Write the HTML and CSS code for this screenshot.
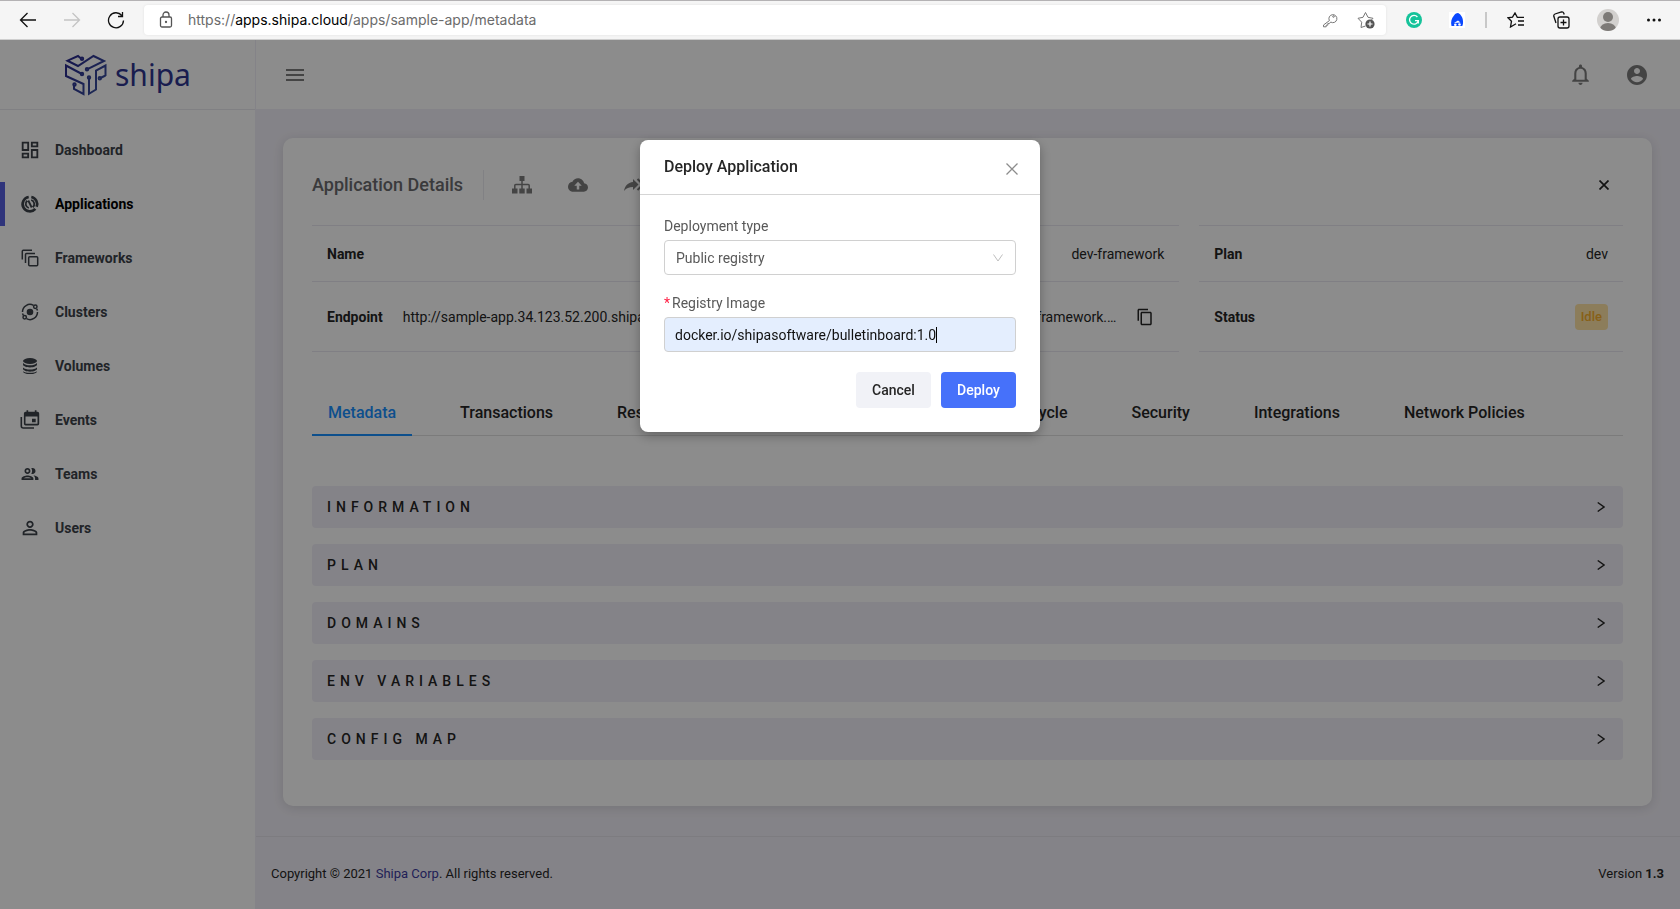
FILE: index.html
```
<!DOCTYPE html>
<html lang="en">

<head>
    <meta charset="UTF-8">
    <meta name="viewport" content="width=device-width, initial-scale=1.0">
    <title>Shipa - sample-app</title>
    <link rel="stylesheet" href="styles.css">
</head>

<body>
    <!-- browser toolbar -->
    <div class="browser">
        <div class="browser-nav">
            <button type="button" class="icon-btn" aria-label="Back">
                <svg width="18" height="18" viewBox="0 0 18 18" class="line"><path d="M17 9H1.500M8.500 2L1.500 9l7 7" /></svg>
            </button>
            <button type="button" class="icon-btn faded" aria-label="Forward" disabled>
                <svg width="18" height="18" viewBox="0 0 18 18" class="line"><path d="M1 9h15.500M9.500 2l7 7-7 7" /></svg>
            </button>
            <button type="button" class="icon-btn" aria-label="Refresh">
                <svg width="18" height="18" viewBox="0 0 18 18" class="line"><path d="M16.500 9.500A7.500 7.500 0 1 1 14.800 4.500M15.500 1v4.500H11" /></svg>
            </button>
        </div>
        <div class="address">
            <svg width="14" height="18" viewBox="0 0 14 18" class="line grey"><rect x="1.500" y="6" width="11" height="10" rx="1.500" /><path d="M4 6V4a3 3 0 0 1 6 0v2" /><circle cx="7" cy="11" r=".5" /></svg>
            <span class="url">https://<b>apps.shipa.cloud</b>/apps/sample-app/metadata</span>
            <button type="button" class="icon-btn" aria-label="Passwords">
                <svg width="16" height="16" viewBox="0 0 16 16" class="line thin"><path d="M7.400 8.600L1.500 13v1.800h2.700v-1.600h1.600v-1.600h1.500L8.700 10a4 4 0 1 0-1.300-1.400z" /><circle cx="11.500" cy="4.500" r=".8" /></svg>
            </button>
            <button type="button" class="icon-btn" aria-label="Add to favorites">
                <svg width="18" height="18" viewBox="0 0 18 18"><path class="line thin" d="M8.500 15L4 16.500l.7-5.300L1 7.300l5-1L8.500 1.500 11 6.300l5 1-1.500 1.600" /><circle cx="13" cy="13" r="4.600" fill="#555" /><path d="M13 10.500v5M10.500 13h5" stroke="#fff" stroke-width="1.200" /></svg>
            </button>
        </div>
        <div class="extensions">
            <button type="button" class="icon-btn" aria-label="Grammar checker">
                <svg width="16" height="16" viewBox="0 0 16 16"><circle cx="8" cy="8" r="8" fill="#15c39a" /><path d="M11.400 5A4.400 4.400 0 1 0 12.300 8.700H9M12.300 8.500v3" fill="none" stroke="#fff" stroke-width="1.300" /></svg>
            </button>
            <button type="button" class="icon-btn" aria-label="Extension">
                <svg width="16" height="16" viewBox="0 0 16 16"><rect width="16" height="16" fill="#fff" /><path d="M2.500 14C1.500 10 2.500 6 5 3.500 6.500 1.500 8.500.8 9.500 1.200c2 1 4.500 4 4.500 8 .2 2-.2 3.500-.7 4.800H3z" fill="#0a48ff" /><path d="M5 11l4-2.500 2.500 2z" fill="#fff" /><circle cx="6.300" cy="12.800" r="1.300" fill="#fff" /><circle cx="10.500" cy="12.500" r="1.300" fill="#fff" /></svg>
            </button>
            <span class="separator"></span>
            <button type="button" class="icon-btn" aria-label="Favorites">
                <svg width="18" height="16" viewBox="0 0 18 16" class="line"><path d="M9 11.800L3.500 15l1-5.800L1 5.800l4.500-.7L8 1l2.300 4.300H17M11 9h6M11 13h6" /></svg>
            </button>
            <button type="button" class="icon-btn" aria-label="Collections">
                <svg width="18" height="18" viewBox="0 0 18 18" class="line"><rect x="6" y="6" width="11" height="11" rx="2" /><path d="M11.500 8.500v6M8.500 11.500h6M4 12L1.800 5.300A2 2 0 0 1 3 3l6.500-2a2 2 0 0 1 2.300 1.200l.4 1.300" /></svg>
            </button>
            <button type="button" class="icon-btn" aria-label="Profile">
                <svg width="22" height="24" viewBox="0 0 22 24"><clipPath id="face"><circle cx="11" cy="12" r="11" /></clipPath><circle cx="11" cy="12" r="11" fill="#d2d0ce" /><g fill="#7d7a77" clip-path="url(#face)"><circle cx="11" cy="9" r="5" /><ellipse cx="11" cy="21" rx="8" ry="6" /></g></svg>
            </button>
            <button type="button" class="icon-btn" aria-label="Settings and more">
                <svg width="16" height="16" viewBox="0 0 16 16"><circle cx="2.500" cy="8" r="1.500" /><circle cx="8" cy="8" r="1.500" /><circle cx="13.500" cy="8" r="1.500" /></svg>
            </button>
        </div>
    </div>

    <div class="app">
        <aside class="sidebar">
            <a href="#" class="logo">
                <svg width="42" height="42" viewBox="65 54 42 42" class="mark">
                    <linearGradient id="brand" gradientUnits="userSpaceOnUse" x1="65" y1="60" x2="107" y2="90">
                        <stop offset="0" stop-color="#28268c" />
                        <stop offset="1" stop-color="#3a539f" />
                    </linearGradient>
                    <path d="M81 58.500L78 56l-10.500 4.700L78 66l15.500-10 10.500 5-16 7.800M81 73.500L66 65.500V76l17.500 8v10L74 89v-3.500M105.500 76V65.500L96 70.500v19l-7 4.300V79M105.500 75.500L100.500 78" />
                    <circle cx="82" cy="58.800" r="1.200" /><circle cx="87" cy="69.300" r="1.200" /><circle cx="82" cy="74" r="1.200" />
                    <circle cx="74.500" cy="84.500" r="1.200" /><circle cx="89" cy="77.500" r="1.200" /><circle cx="99.800" cy="78.300" r="1.200" />
                </svg>
                <span>shipa</span>
            </a>
            <nav class="menu">
                <a href="#">
                    <svg width="22" height="22" viewBox="0 0 24 24"><path d="M19 5v2h-4V5h4M9 5v6H5V5h4m10 8v6h-4v-6h4M9 17v2H5v-2h4M21 3h-8v6h8V3zM11 3H3v10h8V3zm10 8h-8v10h8V11zm-10 4H3v6h8v-6z" /></svg>
                    Dashboard
                </a>
                <a href="#" class="active">
                    <svg width="22" height="22" viewBox="0 0 22 22" class="outline"><path stroke-width="2.700" d="M12.300 4A7.200 7.200 0 0 1 17.600 13.800M16.300 15.800A7.200 7.200 0 1 1 9.700 4" /><path stroke-width="1.800" d="M12.200 7a4.200 4.200 0 0 1 1.600 7.200M9.800 15a4.200 4.200 0 0 1-1.600-7.200M9.300 7.500l3.400 7" /></svg>
                    Applications
                </a>
                <a href="#">
                    <svg width="22" height="22" viewBox="0 0 22 22" class="outline"><rect x="9.700" y="9.700" width="9" height="9" rx="1" /><path d="M6.500 16V7.500a1 1 0 0 1 1-1H16M3.300 12.500V4.300a1 1 0 0 1 1-1H13" /></svg>
                    Frameworks
                </a>
                <a href="#">
                    <svg width="22" height="22" viewBox="0 0 22 22" class="outline"><circle cx="11" cy="11" r="3.300" fill="currentColor" stroke="none" /><path d="M3.500 11A7.500 7.500 0 0 1 14.500 4.300M18.500 11A7.500 7.500 0 0 1 7.500 17.700M3.500 12.500l.8 1.800M18.500 9.500L17.700 7.700" /><circle cx="16.300" cy="5.700" r="1.700" /><circle cx="5.700" cy="16.300" r="1.700" /></svg>
                    Clusters
                </a>
                <a href="#">
                    <svg width="22" height="22" viewBox="0 0 22 22"><ellipse cx="11" cy="6" rx="7" ry="2.900" /><path d="M4 8c1.500 1.500 4 2.300 7 2.300S16.500 9.500 18 8v1.600c0 1.600-3.100 2.900-7 2.900S4 11.200 4 9.600zM4 12.500c1.500 1.500 4 2 7 2s5.500-.5 7-2v1.300c0 1.600-3.100 2.900-7 2.900s-7-1.300-7-2.900zM4 16.200c1.500 1 4 1.600 7 1.600s5.500-.6 7-1.600c0 1.700-3.100 2.900-7 2.900s-7-1.200-7-2.900z" /></svg>
                    Volumes
                </a>
                <a href="#">
                    <svg width="22" height="22" viewBox="0 0 22 22"><path d="M18.500 2.800h-1V1.200h-1.700v1.600H9.200V1.200H7.500v1.600h-1A1.700 1.700 0 0 0 4.900 4.500v10.300a1.700 1.700 0 0 0 1.700 1.700h11.900a1.700 1.700 0 0 0 1.700-1.700V4.500a1.700 1.700 0 0 0-1.700-1.700zm0 12h-12V7.500h12zM13 9.700h3.700v3.500H13z" /><path d="M2.300 8v9a2 2 0 0 0 2 2H15" fill="none" stroke="currentColor" stroke-width="1.600" /></svg>
                    Events
                </a>
                <a href="#">
                    <svg width="22" height="22" viewBox="-1 -1 26 26"><path d="M9 13.750c-2.340 0-7 1.170-7 3.500V19h14v-1.750c0-2.330-4.660-3.500-7-3.500zM4.340 17c.84-.58 2.870-1.250 4.660-1.250s3.820.67 4.660 1.250H4.340zM9 12c1.930 0 3.500-1.570 3.500-3.500S10.930 5 9 5 5.500 6.570 5.500 8.500 7.070 12 9 12zm0-5c.83 0 1.500.67 1.500 1.500S9.830 10 9 10s-1.500-.67-1.500-1.500S8.170 7 9 7zm7.040 6.810c1.160.84 1.960 1.960 1.960 3.440V19h4v-1.750c0-2.020-3.500-3.170-5.960-3.440zM15 12c1.930 0 3.500-1.570 3.500-3.500S16.930 5 15 5c-.54 0-1.040.13-1.500.35.630.89 1 1.980 1 3.150s-.37 2.260-1 3.150c.46.220.96.350 1.500.35z" /></svg>
                    Teams
                </a>
                <a href="#">
                    <svg width="22" height="22" viewBox="0 0 24 24"><path d="M12 5.900c1.160 0 2.100.94 2.100 2.100s-.94 2.100-2.100 2.100S9.900 9.160 9.900 8s.94-2.100 2.100-2.100m0 9c2.970 0 6.100 1.460 6.100 2.100v1.100H5.900V17c0-.64 3.130-2.100 6.100-2.100M12 4C9.790 4 8 5.790 8 8s1.790 4 4 4 4-1.790 4-4-1.790-4-4-4zm0 9c-2.670 0-8 1.340-8 4v3h16v-3c0-2.660-5.330-4-8-4z" /></svg>
                    Users
                </a>
            </nav>
        </aside>

        <div class="main">
            <header class="topbar">
                <button type="button" class="icon-btn" aria-label="Toggle menu">
                    <svg width="18" height="12" viewBox="0 0 18 12"><path d="M0 0h18v2H0zM0 5h18v2H0zM0 10h18v2H0z" /></svg>
                </button>
                <div class="topbar-right">
                    <button type="button" class="icon-btn" aria-label="Notifications">
                        <svg width="25" height="25" viewBox="0 0 24 24"><path d="M12 22c1.100 0 2-.9 2-2h-4c0 1.100.9 2 2 2zm6-6v-5c0-3.070-1.630-5.640-4.500-6.320V4c0-.83-.67-1.500-1.500-1.500s-1.500.67-1.500 1.500v.68C7.640 5.360 6 7.920 6 11v5l-2 2v1h16v-1l-2-2zm-2 1H8v-6c0-2.480 1.510-4.500 4-4.500s4 2.020 4 4.500v6z" /></svg>
                    </button>
                    <button type="button" class="icon-btn" aria-label="Account">
                        <svg width="24" height="24" viewBox="0 0 24 24"><path d="M12 2C6.480 2 2 6.480 2 12s4.480 10 10 10 10-4.480 10-10S17.520 2 12 2zm0 3c1.660 0 3 1.340 3 3s-1.340 3-3 3-3-1.340-3-3 1.340-3 3-3zm0 14.200c-2.500 0-4.710-1.280-6-3.220.03-1.990 4-3.080 6-3.080 1.990 0 5.970 1.090 6 3.080-1.290 1.940-3.500 3.220-6 3.220z" /></svg>
                    </button>
                </div>
            </header>

            <main class="card">
                <div class="card-head">
                    <h1>Application Details</h1>
                    <div class="actions">
                        <button type="button" class="icon-btn" aria-label="Application map">
                            <svg width="20" height="18" viewBox="0 0 20 18"><path d="M7.500 0h5v5h-5zM0 12.500h5.500V17.500H0zM7.300 12.500h5.400V17.500H7.300zM14.500 12.500H20V17.500h-5.500z" /><path d="M10 5v8M2.800 13V9.500a1 1 0 0 1 1-1h12.400a1 1 0 0 1 1 1V13" fill="none" stroke="currentColor" stroke-width="1.500" /></svg>
                        </button>
                        <button type="button" class="icon-btn" aria-label="Deploy">
                            <svg width="20" height="20" viewBox="0 0 24 24"><path d="M19.350 10.040C18.670 6.590 15.640 4 12 4 9.110 4 6.600 5.640 5.350 8.040 2.340 8.360 0 10.910 0 14c0 3.310 2.690 6 6 6h13c2.760 0 5-2.240 5-5 0-2.640-2.050-4.780-4.650-4.960zM13.500 13v4.500h-3V13H7.500L12 8l4.500 5z" /></svg>
                        </button>
                        <button type="button" class="icon-btn" aria-label="Share">
                            <svg width="20" height="14" viewBox="0 0 20 14"><path d="M9 4V1l5.500 5.500L9 12V9C5 9 2.500 10 0 13c.8-5 4-8.500 9-9z" /><path d="M13.500 1l5.500 5.500-5.500 5.500" fill="none" stroke="currentColor" stroke-width="2" /></svg>
                        </button>
                    </div>
                    <button type="button" class="icon-btn close" aria-label="Close details">
                        <svg width="10" height="10" viewBox="0 0 10 10"><path d="M.5.5l9 9M9.500.5l-9 9" stroke="currentColor" stroke-width="1.700" /></svg>
                    </button>
                </div>

                <div class="details">
                    <div class="cell"><b>Name</b><span>sample-app</span></div>
                    <div class="cell"><b>Framework</b><span>dev-framework</span></div>
                    <div class="cell"><b>Plan</b><span>dev</span></div>
                    <div class="cell tall endpoint">
                        <b>Endpoint</b>
                        <span class="urls"><span>http://sample-app.34.123.52.200.shipa.cloud</span><span>sample-app.dev-framework.…</span></span>
                        <button type="button" class="icon-btn" aria-label="Copy endpoint">
                            <svg width="18" height="18" viewBox="0 0 24 24"><path d="M16 1H4c-1.100 0-2 .9-2 2v14h2V3h12V1zm3 4H8c-1.100 0-2 .9-2 2v14c0 1.100.9 2 2 2h11c1.100 0 2-.9 2-2V7c0-1.100-.9-2-2-2zm0 16H8V7h11v14z" /></svg>
                        </button>
                    </div>
                    <div class="cell tall"><b>Status</b><span class="badge">Idle</span></div>
                </div>

                <nav class="tabs">
                    <a href="#" class="active">Metadata</a>
                    <a href="#">Transactions</a>
                    <a href="#">Resources</a>
                    <a href="#">Monitoring</a>
                    <a href="#">Logs</a>
                    <a href="#">Life Cycle</a>
                    <a href="#">Security</a>
                    <a href="#">Integrations</a>
                    <a href="#">Network Policies</a>
                </nav>

                <div class="panels">
                    <button type="button" class="panel">INFORMATION <svg width="8" height="10" viewBox="0 0 8 10"><path d="M.7.5L7 5 .7 9.500" /></svg></button>
                    <button type="button" class="panel">PLAN <svg width="8" height="10" viewBox="0 0 8 10"><path d="M.7.5L7 5 .7 9.500" /></svg></button>
                    <button type="button" class="panel">DOMAINS <svg width="8" height="10" viewBox="0 0 8 10"><path d="M.7.5L7 5 .7 9.500" /></svg></button>
                    <button type="button" class="panel">ENV VARIABLES <svg width="8" height="10" viewBox="0 0 8 10"><path d="M.7.5L7 5 .7 9.500" /></svg></button>
                    <button type="button" class="panel">CONFIG MAP <svg width="8" height="10" viewBox="0 0 8 10"><path d="M.7.5L7 5 .7 9.500" /></svg></button>
                </div>
            </main>

            <footer class="footer">
                <span>Copyright © 2021 <a href="#">Shipa Corp</a>. All rights reserved.</span>
                <span>Version <b>1.3</b></span>
            </footer>
        </div>
    </div>

    <!-- deploy dialog -->
    <div class="overlay">
        <form class="modal" role="dialog" aria-labelledby="modal-title">
            <div class="modal-head">
                <h2 id="modal-title">Deploy Application</h2>
                <button type="button" class="icon-btn" aria-label="Close">
                    <svg width="12" height="12" viewBox="0 0 12 12"><path d="M.5.5l11 11M11.500.5l-11 11" stroke="currentColor" stroke-width="1.300" /></svg>
                </button>
            </div>
            <div class="modal-body">
                <label for="type">Deployment type</label>
                <div class="select">
                    <select id="type">
                        <option>Public registry</option>
                    </select>
                    <svg width="10" height="8" viewBox="0 0 10 8"><path d="M.5.5L5 7 9.500.5" /></svg>
                </div>
                <label for="image"><span class="required">*</span>Registry Image</label>
                <input type="text" id="image" value="docker.io/shipasoftware/bulletinboard:1.0">
                <div class="buttons">
                    <button type="button" class="btn">Cancel</button>
                    <button type="submit" class="btn primary">Deploy</button>
                </div>
            </div>
        </form>
    </div>
</body>

</html>
```

FILE: styles.css
```
* {
    box-sizing: border-box;
}

body {
    margin: 0;
    min-height: 100vh;
    display: flex;
    flex-direction: column;
    font-family: Roboto, Arial, sans-serif;
    font-size: 14px;
    line-height: 20px;
    color: #262626;
}

a {
    color: inherit;
    text-decoration: none;
}

button,
input,
select {
    font: inherit;
    color: inherit;
}

svg {
    display: block;
    flex: none;
    fill: currentColor;
}

.icon-btn {
    display: flex;
    padding: 0;
    border: 0;
    background: none;
    cursor: pointer;
}

/* browser toolbar */
.browser {
    display: flex;
    align-items: center;
    height: 40px;
    padding-left: 19px;
    background: #f5f5f5;
    border-top: 1px solid #b4b2b4;
    border-bottom: 1px solid #cfcfcf;
    color: #111;
}

.browser-nav {
    display: flex;
    gap: 26px;
    width: 125px;
}

.line {
    fill: none;
    stroke: currentColor;
    stroke-width: 1.3;
}

.grey {
    color: #555;
}

.thin {
    fill: none;
    stroke: #777;
    stroke-width: 1;
}

.faded {
    color: #c4c4c4;
}

.address {
    flex: 1;
    display: flex;
    align-items: center;
    gap: 19px;
    height: 30px;
    padding: 0 11px 0 15px;
    border-radius: 4px;
    background: #fff;
    box-shadow: 0 0 3px rgba(0, 0, 0, 0.08);
}

.url {
    flex: 1;
    margin-left: -4px;
    font-family: Inter, sans-serif;
    color: #6b6b6b;
}

.url b {
    font-weight: 400;
    color: #000;
}

.extensions {
    display: flex;
    align-items: center;
    gap: 27px;
    width: 294px;
    padding-left: 20px;
}

.separator {
    flex: none;
    width: 2px;
    height: 16px;
    margin: 0 -7px;
    background: #c8c8c8;
}

/* layout */
.app {
    flex: 1;
    display: flex;
    background: #f1eff7;
}

.sidebar {
    width: 256px;
    flex: none;
    background: #fff;
    border-right: 1px solid #f1eff7;
}

.logo {
    display: flex;
    align-items: center;
    gap: 8px;
    height: 70px;
    padding-left: 65px;
    border-bottom: 1px solid #e9e9ee;
    font-family: "Noto Sans", sans-serif;
    font-size: 30px;
    color: #2f3591;
}

.mark {
    fill: none;
    stroke: url(#brand);
    stroke-width: 2;
}

.menu {
    display: flex;
    flex-direction: column;
    gap: 10px;
    padding-top: 18px;
    font-weight: 700;
    color: #3c424a;
}

.menu a {
    display: flex;
    align-items: center;
    gap: 14px;
    height: 44px;
    padding-left: 14px;
    border-left: 5px solid transparent;
}

.menu .active {
    border-color: #5660e0;
    color: #000;
}

.menu .active svg {
    color: #3c424a;
}

.outline {
    fill: none;
    stroke: currentColor;
    stroke-width: 1.5;
}

.main {
    flex: 1;
    min-width: 0;
    display: flex;
    flex-direction: column;
}

.topbar {
    display: flex;
    align-items: center;
    justify-content: space-between;
    height: 69px;
    padding: 0 31px 0 30px;
    background: #fff;
    color: #7d7d7d;
}

.topbar-right {
    display: flex;
    align-items: center;
    gap: 32px;
}

.card {
    margin: 29px 28px 30px 27px;
    padding: 32px 29px 46px;
    border-radius: 10px;
    background: #fff;
    box-shadow: 0 2px 12px rgba(0, 0, 0, 0.12);
}

.card-head {
    display: flex;
    align-items: center;
    height: 30px;
    margin-bottom: 25px;
    color: #7d7d7d;
}

.card-head h1 {
    margin: 0;
    font-size: 18px;
    font-weight: 500;
    color: #6a6a6d;
}

.actions {
    display: flex;
    align-items: center;
    gap: 36px;
    height: 30px;
    margin-left: 20px;
    padding-left: 28px;
    border-left: 1px solid #ececf0;
}

.close {
    margin-left: auto;
    margin-right: 14px;
    color: #262626;
}

.details {
    display: grid;
    grid-template-columns: repeat(3, 1fr);
    column-gap: 20px;
}

.cell {
    display: flex;
    align-items: center;
    justify-content: space-between;
    height: 57px;
    padding: 0 15px;
    border: solid #e9e8f0;
    border-width: 1px 0;
}

.tall {
    height: 70px;
    border-top: 0;
}

.endpoint {
    grid-column: span 2;
    gap: 20px;
    padding-right: 25px;
}

.urls {
    flex: 1;
    display: flex;
    justify-content: space-between;
}

.badge {
    padding: 3px 6px;
    border-radius: 4px;
    font-size: 13px;
    font-weight: 500;
    background: #ffe3a6;
    color: #f7b02c;
}

.tabs {
    display: flex;
    gap: 32px;
    margin-top: 38px;
    box-shadow: inset 0 -1px #e0e0e0;
    font-size: 16px;
    font-weight: 500;
}

.tabs a {
    padding: 13px 16px;
}

.tabs .active {
    color: #1890ff;
    box-shadow: inset 0 -2px #1890ff;
}

.panels {
    display: flex;
    flex-direction: column;
    gap: 16px;
    margin-top: 50px;
}

.panel {
    display: flex;
    align-items: center;
    justify-content: space-between;
    height: 42px;
    padding: 0 18px 0 15px;
    border: 0;
    border-radius: 4px;
    background: #f1eff7;
    font-weight: 500;
    letter-spacing: 5px;
    cursor: pointer;
}

.panel svg {
    fill: none;
    stroke: currentColor;
    stroke-width: 1.4;
}

.footer {
    flex: 1;
    display: flex;
    align-items: center;
    justify-content: space-between;
    padding: 2px 16px 0 15px;
    border-top: 1px solid #e3e2ea;
    font-size: 13px;
}

.footer a {
    color: #3d3b9e;
}

/* deploy dialog */
.overlay {
    position: fixed;
    inset: 40px 0 0;
    display: flex;
    justify-content: center;
    align-items: flex-start;
    padding-top: 100px;
    background: rgba(0, 0, 0, 0.45);
}

.modal {
    width: 400px;
    border-radius: 8px;
    background: #fff;
    box-shadow: 0 4px 12px rgba(0, 0, 0, 0.3);
}

.modal-head {
    display: flex;
    align-items: flex-start;
    justify-content: space-between;
    height: 55px;
    padding: 17px 22px 0 24px;
    border-bottom: 1px solid #d5d5d5;
    color: #8c8c8c;
}

.modal-head .icon-btn {
    padding: 6px 0;
}

.modal-head h2 {
    margin: 0;
    font-size: 16px;
    font-weight: 500;
    color: #262626;
}

.modal-body {
    display: flex;
    flex-direction: column;
    padding: 21px 24px 24px;
    color: #595959;
}

.modal label {
    margin-bottom: 3px;
    line-height: 21px;
}

.required {
    margin-right: 2px;
    color: #ff1f44;
}

.select {
    display: flex;
    align-items: center;
    margin-bottom: 18px;
}

.select svg {
    margin-left: -23px;
    fill: none;
    stroke: #bfbfbf;
    pointer-events: none;
}

select,
input {
    width: 100%;
    height: 35px;
    padding: 0 11px;
    border: 1px solid #d0d0d0;
    border-radius: 4px;
    background: #fff;
    outline: none;
    appearance: none;
}

/* text caret after the typed value */
input {
    padding-left: 10px;
    background: linear-gradient(#000, #000) 271px center / 1px 16px no-repeat #e4eefe;
    color: #111;
}

.buttons {
    display: flex;
    justify-content: flex-end;
    gap: 10px;
    margin-top: 20px;
}

.btn {
    width: 75px;
    height: 36px;
    padding: 0;
    border: 0;
    border-radius: 4px;
    font-weight: 500;
    background: #f1f2f7;
    color: #262626;
    cursor: pointer;
}

.primary {
    background: #4671fa;
    color: #fff;
}
```
